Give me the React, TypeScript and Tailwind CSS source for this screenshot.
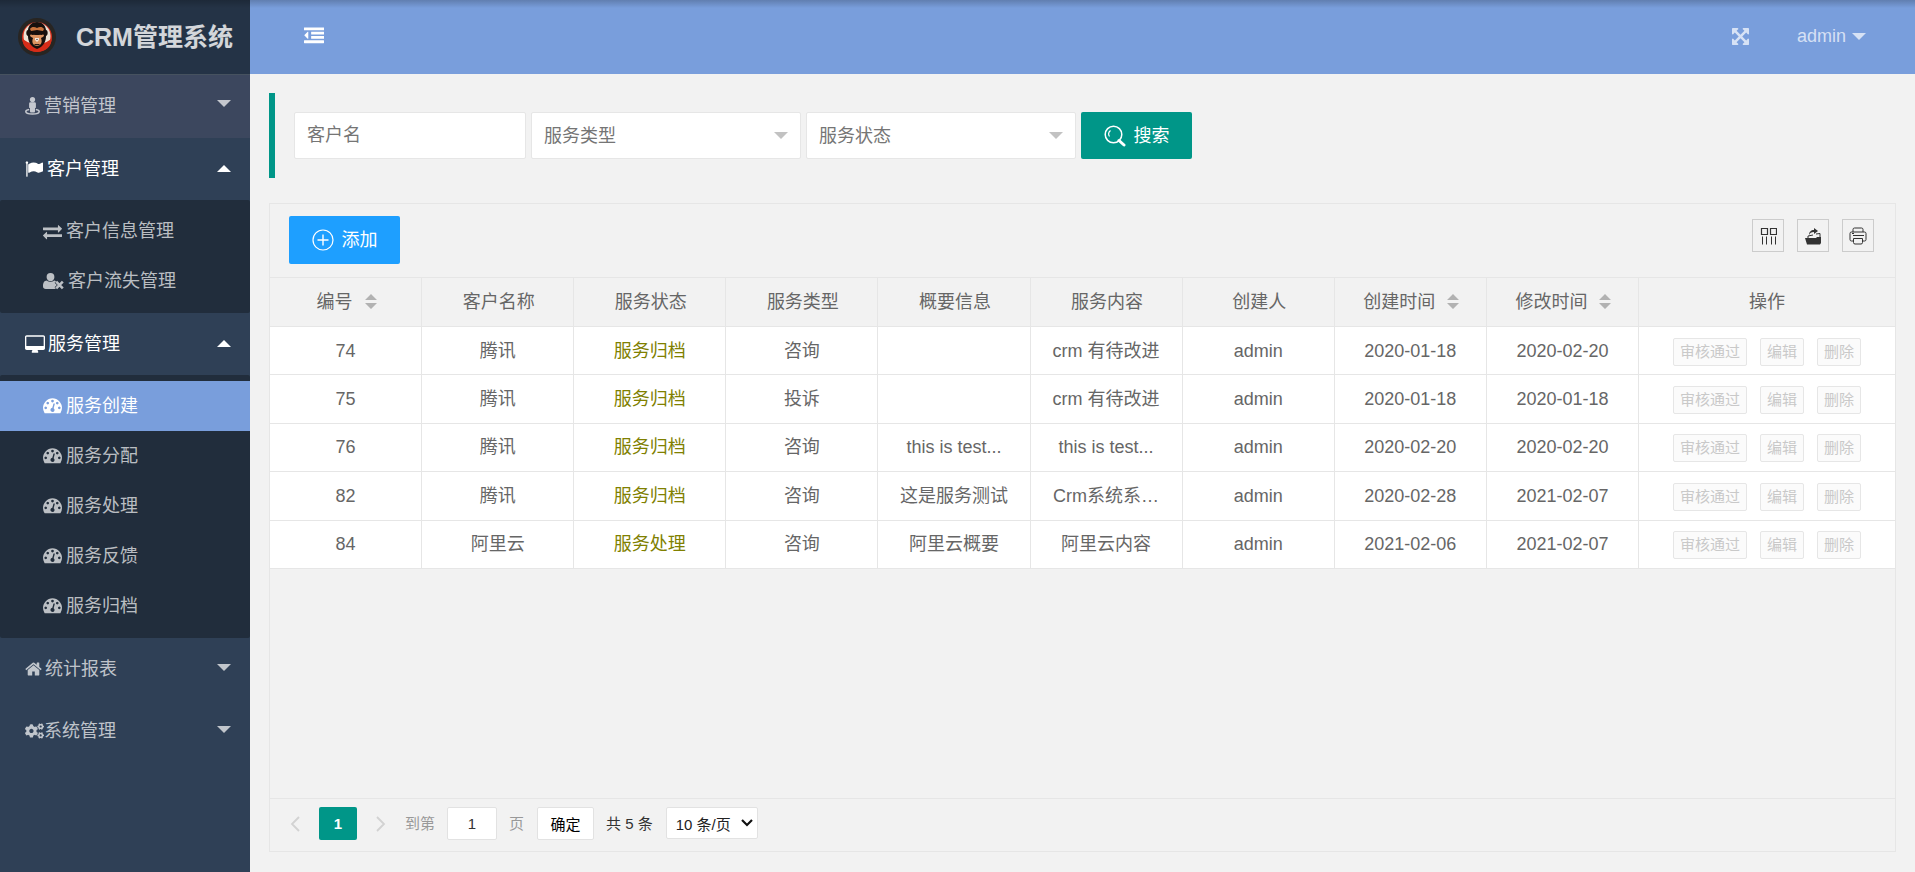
import { useState } from "react";
import type { ReactNode } from "react";
import clsx from "clsx";
import { FaCogs } from "react-icons/fa";

type MenuChild = { title: string; icon: ReactNode };

type MenuItem = {
  title: string;
  icon: ReactNode;
  gap?: string;
  hovered?: boolean;
  open?: boolean;
  children?: MenuChild[];
};

type ServiceRow = {
  id: number;
  customer: string;
  state: string;
  type: string;
  overview: string;
  content: string;
  creator: string;
  createDate: string;
  updateDate: string;
};

const Glyph = ({
  d,
  className,
  viewBox = "0 0 1792 1792",
}: {
  d: string;
  className: string;
  viewBox?: string;
}) => (
  <svg viewBox={viewBox} className={className} fill="currentColor" aria-hidden>
    <path d={d} />
  </svg>
);

const FLAG =
  "M320 256q0 72-64 110v1266q0 13-9.5 22.5t-22.5 9.5h-64q-13 0-22.5-9.5t-9.5-22.5v-1266q-64-38-64-110 0-53 37.5-90.5t90.5-37.5 90.5 37.5 37.5 90.5zm1472 64v763q0 25-12.5 38.5t-39.5 27.5q-215 116-369 116-61 0-123.5-22t-108.5-48-115.5-48-142.5-22q-192 0-464 146-17 9-33 9-26 0-45-19t-19-45v-742q0-32 31-55 21-14 79-43 236-120 421-120 107 0 200 29t219 88q38 19 88 19 54 0 117.5-21t110-47 88-47 54.5-21q26 0 45 19t19 45z";
const EXCHANGE =
  "M1792 1184v192q0 13-9.5 22.5t-22.5 9.5h-1376v192q0 13-9.5 22.5t-22.5 9.5q-12 0-24-10l-319-320q-9-9-9-22 0-14 9-23l320-320q9-9 23-9 13 0 22.5 9.5t9.5 22.5v192h1376q13 0 22.5 9.5t9.5 22.5zm0-544q0 14-9 23l-320 320q-9 9-23 9-13 0-22.5-9.5t-9.5-22.5v-192h-1376q-13 0-22.5-9.5t-9.5-22.5v-192q0-13 9.5-22.5t22.5-9.5h1376v-192q0-14 9-23t23-9q12 0 24 10l319 319q9 9 9 23z";
const DESKTOP =
  "M1728 992v-832q0-13-9.5-22.5t-22.5-9.5h-1600q-13 0-22.5 9.5t-9.5 22.5v832q0 13 9.5 22.5t22.5 9.5h1600q13 0 22.5-9.5t9.5-22.5zm128-832v1088q0 66-47 113t-113 47h-544q0 37 16 77.5t32 71 16 43.5q0 26-19 45t-45 19h-512q-26 0-45-19t-19-45q0-14 16-44t32-70 16-78h-544q-66 0-113-47t-47-113v-1088q0-66 47-113t113-47h1600q66 0 113 47t47 113z";
const GAUGE =
  "M384 1152q0-53-37.5-90.5t-90.5-37.5-90.5 37.5-37.5 90.5 37.5 90.5 90.5 37.5 90.5-37.5 37.5-90.5zm192-448q0-53-37.5-90.5t-90.5-37.5-90.5 37.5-37.5 90.5 37.5 90.5 90.5 37.5 90.5-37.5 37.5-90.5zm428 481l101-382q6-26-7.5-48.5t-38.5-29.5-48 6.5-30 39.5l-101 382q-60 5-107 43.5t-63 98.5q-20 77 20 146t117 89 146-20 89-117q16-60-6-117t-72-91zm660-33q0-53-37.5-90.5t-90.5-37.5-90.5 37.5-37.5 90.5 37.5 90.5 90.5 37.5 90.5-37.5 37.5-90.5zm-640-640q0-53-37.5-90.5t-90.5-37.5-90.5 37.5-37.5 90.5 37.5 90.5 90.5 37.5 90.5-37.5 37.5-90.5zm448 192q0-53-37.5-90.5t-90.5-37.5-90.5 37.5-37.5 90.5 37.5 90.5 90.5 37.5 90.5-37.5 37.5-90.5zm320 448q0 261-141 483-19 29-54 29h-1402q-35 0-54-29-141-221-141-483 0-182 71-348t191-286 286-191 348-71 348 71 286 191 191 286 71 348z";
const HOME =
  "M1472 992v480q0 26-19 45t-45 19h-384v-384h-256v384h-384q-26 0-45-19t-19-45v-480q0-1 .5-3t.5-3l575-474 575 474q1 2 1 6zm223-69l-62 74q-8 9-21 11h-3q-13 0-21-7l-692-577-692 577q-12 8-24 7-13-2-21-11l-62-74q-8-10-7-23.5t11-21.5l719-599q32-26 76-26t76 26l244 204v-195q0-14 9-23t23-9h192q14 0 23 9t9 23v408l219 182q10 8 11 21.5t-7 23.5z";
const OUTDENT =
  "M384 544v576q0 13-9.5 22.5t-22.5 9.5q-14 0-23-9l-288-288q-9-9-9-23t9-23l288-288q9-9 23-9 13 0 22.5 9.5t9.5 22.5zm1408 768v192q0 13-9.5 22.5t-22.5 9.5h-1728q-13 0-22.5-9.5t-9.5-22.5v-192q0-13 9.5-22.5t22.5-9.5h1728q13 0 22.5 9.5t9.5 22.5zm0-384v192q0 13-9.5 22.5t-22.5 9.5h-1088q-13 0-22.5-9.5t-9.5-22.5v-192q0-13 9.5-22.5t22.5-9.5h1088q13 0 22.5 9.5t9.5 22.5zm0-384v192q0 13-9.5 22.5t-22.5 9.5h-1088q-13 0-22.5-9.5t-9.5-22.5v-192q0-13 9.5-22.5t22.5-9.5h1088q13 0 22.5 9.5t9.5 22.5zm0-384v192q0 13-9.5 22.5t-22.5 9.5h-1728q-13 0-22.5-9.5t-9.5-22.5v-192q0-13 9.5-22.5t22.5-9.5h1728q13 0 22.5 9.5t9.5 22.5z";
const ARROWS =
  "M1411 541l-355 355 355 355 144-144q29-31 70-14 39 17 39 59v448q0 26-19 45t-45 19h-448q-42 0-59-40-17-39 14-69l144-144-355-355-355 355 144 144q31 30 14 69-17 40-59 40h-448q-26 0-45-19t-19-45v-448q0-42 40-59 39-17 69 14l144 144 355-355-355-355-144 144q-19 19-45 19-12 0-24-5-40-17-40-59v-448q0-26 19-45t45-19h448q42 0 59 40 17 39-14 69l-144 144 355 355 355-355-144-144q-31-30-14-69 17-40 59-40h448q26 0 45 19t19 45v448q0 42-39 59-13 5-25 5-26 0-45-19z";

const StreetView = () => (
  <svg viewBox="0 0 15 18" className="h-[18px] w-[15px]" fill="currentColor" aria-hidden>
    <circle cx="7.5" cy="2.600" r="2.600" />
    <path d="M5.500 5.200h4q1.400 0 1.400 1.400v3.600q0 .9-.9.9v3.400q0 .9-.9.9H5.900q-.9 0-.9-.9v-3.400q-.9 0-.9-.9V6.600q0-1.400 1.400-1.400z" />
    <path
      fill="none"
      stroke="currentColor"
      strokeWidth="1.500"
      d="M4.200 12.600C2.200 12.900.8 13.500.8 14.500c0 1.500 3 2.500 6.700 2.500s6.700-1 6.700-2.500c0-1-1.400-1.600-3.400-1.900"
    />
  </svg>
);

const UserTimes = () => (
  <svg viewBox="0 0 21 18" className="h-[18px] w-[21px]" aria-hidden>
    <path
      fill="currentColor"
      d="M7.5 1a3.9 4 0 0 1 3.9 4A3.9 4 0 0 1 7.5 9.2 3.9 4 0 0 1 3.6 5 3.9 4 0 0 1 7.500 1zM4 8.600C5 9.600 6.200 10 7.500 10s2.500-.4 3.500-1.400c.8 0 1.500.2 2.100.6L11.600 10.700l2.300 2.300-2.300 2.300 1.300 1.300c-.3.3-.8.4-1.300.4H2.800C1 17 0 16 0 14.200 0 11.500.8 8.600 4 8.600z"
    />
    <path
      stroke="currentColor"
      strokeWidth="2.6"
      d="M13.200 9.700l6.600 6.600M19.800 9.700l-6.600 6.600"
    />
  </svg>
);

const MonkeyLogo = () => (
  <svg viewBox="0 0 38 38" className="size-[38px]" aria-hidden>
    <circle cx="19" cy="19" r="19" fill="#282522" />
    <circle cx="19" cy="19" r="15" fill="#d8301c" />
    <circle cx="19" cy="18" r="13.500" fill="#ece2d4" />
    <path d="M4.500 21l5 3 9.500 4 9.500-4 5-3c0 8-6.500 13-14.500 13S4.500 29 4.500 21z" fill="#d62c18" />
    <path
      d="M19 4c-5 0-8.500 3-9 8-2 0-2.500 5 0 6 0 6 3 11 9 13 6-2 9-7 9-13 2.500-1 2-6 0-6-.5-5-4-8-9-8z"
      fill="#17100d"
    />
    <path d="M12 11c2-3 5-2 7-1 2-1 5-2 7 1l-1 2-6-1-6 1z" fill="#c9743d" />
    <path
      d="M12 17c2-1 4 0 7 0s5-1 7 0c0 2-2 2-3 3 1 3 1 5-1 7-1 1-5 1-6 0-2-2-2-4-1-7-1-1-3-1-3-3z"
      fill="#dc9460"
    />
    <path d="M12 14h14l-2 3-5-1-5 1z" fill="#17100d" />
    <path d="M17 20h4v2l-2 2-2-2z" fill="#f1e6da" />
    <path d="M18 21h2l-1 1zM16 26h6l-1 1h-4z" fill="#2a1b14" />
  </svg>
);

const Caret = ({ up, className }: { up?: boolean; className?: string }) => (
  <svg viewBox="0 0 14 7" className={clsx("h-[7px] w-[14px]", className)} fill="currentColor" aria-hidden>
    <path d={up ? "M0 7L7 0l7 7z" : "M0 0h14L7 7z"} />
  </svg>
);

const gauge = <Glyph d={GAUGE} viewBox="0 128 1792 1792" className="size-[19px]" />;

const menu: MenuItem[] = [
  {
    title: "营销管理",
    icon: <StreetView />,
    gap: "gap-1",
    hovered: true,
  },
  {
    title: "客户管理",
    icon: <Glyph d={FLAG} className="h-[18px] w-[18px]" />,
    gap: "gap-1",
    open: true,
    children: [
      { title: "客户信息管理", icon: <Glyph d={EXCHANGE} className="size-[19px]" /> },
      { title: "客户流失管理", icon: <UserTimes /> },
    ],
  },
  {
    title: "服务管理",
    icon: <Glyph d={DESKTOP} viewBox="-64 0 1920 1664" className="h-[18px] w-[20px]" />,
    gap: "gap-[3px]",
    open: true,
    children: [
      { title: "服务创建", icon: gauge },
      { title: "服务分配", icon: gauge },
      { title: "服务处理", icon: gauge },
      { title: "服务反馈", icon: gauge },
      { title: "服务归档", icon: gauge },
    ],
  },
  {
    title: "统计报表",
    icon: <Glyph d={HOME} viewBox="64 0 1664 1792" className="h-[18px] w-[17px]" />,
    gap: "gap-[3px]",
  },
  { title: "系统管理", icon: <FaCogs className="h-[18px] w-[19px]" /> },
];

const rows: ServiceRow[] = [
  { id: 74, customer: "腾讯", state: "服务归档", type: "咨询", overview: "", content: "crm 有待改进", creator: "admin", createDate: "2020-01-18", updateDate: "2020-02-20" },
  { id: 75, customer: "腾讯", state: "服务归档", type: "投诉", overview: "", content: "crm 有待改进", creator: "admin", createDate: "2020-01-18", updateDate: "2020-01-18" },
  { id: 76, customer: "腾讯", state: "服务归档", type: "咨询", overview: "this is test...", content: "this is test...", creator: "admin", createDate: "2020-02-20", updateDate: "2020-02-20" },
  { id: 82, customer: "腾讯", state: "服务归档", type: "咨询", overview: "这是服务测试", content: "Crm系统系…", creator: "admin", createDate: "2020-02-28", updateDate: "2021-02-07" },
  { id: 84, customer: "阿里云", state: "服务处理", type: "咨询", overview: "阿里云概要", content: "阿里云内容", creator: "admin", createDate: "2021-02-06", updateDate: "2021-02-07" },
];

const columns = [
  { title: "编号", sort: true },
  { title: "客户名称" },
  { title: "服务状态" },
  { title: "服务类型" },
  { title: "概要信息" },
  { title: "服务内容" },
  { title: "创建人" },
  { title: "创建时间", sort: true },
  { title: "修改时间", sort: true },
];

const Sidebar = () => {
  const [active, setActive] = useState("服务创建");

  return (
    <aside className="w-[250px] shrink-0 bg-[#2f4056]">
      <a
        href="#"
        className="flex h-[75px] items-center border-b border-[#46525f] bg-[#243346] pl-[18px]"
      >
        <MonkeyLogo />
        <h1 className="pl-5 text-[25px] leading-[38px] font-bold text-white/80">
          CRM管理系统
        </h1>
      </a>
      <nav>
        {menu.map((item) => (
          <div key={item.title}>
            <button
              className={clsx(
                "flex w-full items-center justify-between pr-[19px] pl-[25px]",
                item.hovered ? "h-[63px] bg-[#3c475e] pb-[2px]" : "h-[62px]",
                item.open ? "text-white" : "text-white/70",
              )}
            >
              <span className={clsx("flex items-center", item.gap)}>
                {item.icon}
                {item.title}
              </span>
              <Caret up={item.open} className={item.open ? "mb-[2px]" : "mb-1"} />
            </button>
            {item.children && (
              <ul className="rounded-xs bg-[#212d3c] pt-[6px] pb-[7px]">
                {item.children.map((child) => (
                  <li key={child.title}>
                    <a
                      href="#"
                      onClick={() => setActive(child.title)}
                      className={clsx(
                        "flex h-[50px] items-center gap-1 pl-[43px]",
                        active === child.title
                          ? "bg-[#799edc] text-white"
                          : "text-white/70",
                      )}
                    >
                      {child.icon}
                      {child.title}
                    </a>
                  </li>
                ))}
              </ul>
            )}
          </div>
        ))}
      </nav>
    </aside>
  );
};

const FilterSelect = ({ label }: { label: string }) => (
  <div className="grid w-[270px] items-center">
    <select
      aria-label={label}
      className="col-start-1 row-start-1 h-[47px] appearance-none rounded-xs border border-[#e6e6e6] bg-white pl-3 text-[#757575]"
    >
      <option>{label}</option>
    </select>
    <Caret className="pointer-events-none col-start-1 row-start-1 mr-[13px] justify-self-end text-[#c2c2c2]" />
  </div>
);

const SortArrows = () => (
  <svg viewBox="0 0 12 16" className="h-4 w-3" fill="#b2b2b2" aria-hidden>
    <path d="M6 0l6 6H0zM0 9h12l-6 6z" />
  </svg>
);

const ToolButton = ({ label, children }: { label: string; children: ReactNode }) => (
  <button
    aria-label={label}
    className="flex h-[33px] w-8 items-center justify-center border border-[#ccc] text-[#333]"
  >
    {children}
  </button>
);

const Toolbar = () => (
  <div className="flex h-[73px] items-start justify-between py-3 pr-[21px] pl-[19px]">
    <button className="flex h-12 w-[111px] items-center justify-center gap-2 rounded-xs bg-[#1e9fff] text-white">
      <svg viewBox="0 0 22 22" className="size-[22px]" fill="none" stroke="currentColor" aria-hidden>
        <circle cx="11" cy="11" r="10" strokeWidth="1.200" />
        <path d="M11 5.500v11M5.500 11h11" strokeWidth="1.400" />
      </svg>
      添加
    </button>
    <div className="flex gap-[13px] pt-[3px]">
      <ToolButton label="筛选列">
        <svg viewBox="0 0 18 18" className="size-[18px]" fill="none" stroke="currentColor" aria-hidden>
          <path d="M2.500 1.500h6v6h-6zM11.500 1.500h6v6h-6z" strokeWidth="1.200" />
          <path d="M3.500 9.500v8M7.500 9.500v8M12.500 9.500v8M16.500 9.500v8" />
        </svg>
      </ToolButton>
      <ToolButton label="导出">
        <svg viewBox="0 0 18 18" className="size-[18px]" aria-hidden>
          <path fill="currentColor" d="M1 11h11l1-1h4v6l-1 1.500H3zM5 8c0-3 2-5 5-5V1l4 3-4 3V5C7 5 6 6 5 8z" />
          <path fill="none" stroke="currentColor" d="M4 11V9l5-1M12 7l4-.5v5" />
        </svg>
      </ToolButton>
      <ToolButton label="打印">
        <svg viewBox="0 0 18 18" className="size-[18px]" fill="none" stroke="currentColor" aria-hidden>
          <path d="M4 5V2.500Q4 1 5.500 1h7Q14 1 14 2.500V5M4.500 14H2.500Q1 14 1 12.500v-6Q1 5 2.500 5h13Q17 5 17 6.500v6Q17 14 15.500 14h-2" />
          <path d="M4.500 11.500h9v4q0 1.500-1.500 1.500H6q-1.500 0-1.500-1.500zM4 8.500h11M3 6.500h2" />
        </svg>
      </ToolButton>
    </div>
  </div>
);

const ServiceTable = () => (
  <table className="h-[292px] w-full table-fixed border-separate border-spacing-0 text-center">
    <thead>
      <tr className="h-[50px]">
        {columns.map((col) => (
          <th
            key={col.title}
            className="h-[50px] border-t border-r border-b border-[#e6e6e6] p-0 font-normal"
          >
            <span className="flex items-center justify-center gap-3 pl-[2px]">
              {col.title}
              {col.sort && <SortArrows />}
            </span>
          </th>
        ))}
        <th className="w-[256px] border-t border-b border-[#e6e6e6] p-0 font-normal">
          操作
        </th>
      </tr>
    </thead>
    <tbody className="bg-white">
      {rows.map((row) => (
        <tr
          key={row.id}
          className="h-12 [&>td]:border-b [&>td]:border-[#e6e6e6] [&>td]:p-0 [&>td:not(:last-child)]:border-r"
        >
          <td>{row.id}</td>
          <td>{row.customer}</td>
          <td className="text-[#808000]">{row.state}</td>
          <td>{row.type}</td>
          <td>{row.overview}</td>
          <td>{row.content}</td>
          <td>{row.creator}</td>
          <td>{row.createDate}</td>
          <td>{row.updateDate}</td>
          <td>
            <div className="flex justify-center gap-[13px] pt-[2px] text-[15px] text-[#c9c9c9]">
              {["审核通过", "编辑", "删除"].map((name) => (
                <button
                  key={name}
                  disabled
                  className="h-7 rounded-xs border border-[#e6e6e6] bg-[#fbfbfb] px-[6px]"
                >
                  {name}
                </button>
              ))}
            </div>
          </td>
        </tr>
      ))}
    </tbody>
  </table>
);

const Pager = () => (
  <div className="flex h-[53px] items-start border-t border-[#e6e6e6] pt-2 pl-5 text-[15px] leading-[33px] text-[#333]">
    <button aria-label="上一页" className="flex h-[33px] items-center text-[#d2d2d2]">
      <svg viewBox="0 0 10 16" className="h-4 w-[10px]" fill="none" stroke="currentColor" strokeWidth="1.800" aria-hidden>
        <path d="M9 1L2 8l7 7" />
      </svg>
    </button>
    <button className="ml-[19px] h-[33px] w-[38px] rounded-xs bg-[#009688] font-bold text-white">
      1
    </button>
    <button aria-label="下一页" className="ml-[19px] flex h-[33px] items-center text-[#d2d2d2]">
      <svg viewBox="0 0 10 16" className="h-4 w-[10px]" fill="none" stroke="currentColor" strokeWidth="1.800" aria-hidden>
        <path d="M1 1l7 7-7 7" />
      </svg>
    </button>
    <label className="ml-[19px] flex text-[#999]">
      到第
      <input
        defaultValue="1"
        className="mx-3 h-[33px] w-[50px] rounded-xs border border-[#e2e2e2] bg-white text-center text-[#333]"
      />
      页
    </label>
    <button className="ml-[13px] h-[33px] w-[57px] rounded-xs border border-[#e2e2e2] bg-white text-black">
      确定
    </button>
    <span className="ml-3">共 5 条</span>
    <div className="ml-[13px] grid w-[92px] items-center">
      <select
        aria-label="每页条数"
        className="col-start-1 row-start-1 h-8 appearance-none rounded-xs border border-[#e2e2e2] bg-white pl-[9px] text-[#222]"
      >
        <option>10 条/页</option>
      </select>
      <svg
        viewBox="0 0 12 8"
        className="pointer-events-none col-start-1 row-start-1 mr-[5px] h-2 w-3 justify-self-end"
        fill="none"
        stroke="#111"
        strokeWidth="2.200"
        aria-hidden
      >
        <path d="M1 1l5 5 5-5" />
      </svg>
    </div>
  </div>
);

const App = () => {
  return (
    <div className="relative flex min-h-screen bg-[#f2f2f2] font-['Liberation_Sans','Noto_Sans_CJK_SC',sans-serif] text-[18px] leading-6 text-[#666]">
      <Sidebar />
      <div className="flex min-w-0 flex-1 flex-col">
        <header className="flex h-[74px] items-center justify-between bg-[#799edc] pr-[49px] pb-[2px] pl-[54px]">
          <button aria-label="收起菜单" className="text-white">
            <Glyph d={OUTDENT} className="size-5" />
          </button>
          <div className="flex items-center gap-12 text-white/70">
            <button aria-label="全屏">
              <Glyph d={ARROWS} viewBox="128 128 1536 1536" className="size-[17px]" />
            </button>
            <a href="#" className="flex items-center gap-[6px]">
              admin
              <Caret />
            </a>
          </div>
        </header>

        <main className="flex flex-1 flex-col px-[19px] pt-[19px] pb-[20px]">
          <form className="flex gap-[5px] border-l-6 border-[#009688] py-[19px] pl-[19px]">
            <input
              aria-label="客户名"
              placeholder="客户名"
              className="h-[47px] w-[232px] rounded-xs border border-[#e6e6e6] bg-white pl-3 placeholder:text-[#757575]"
            />
            <FilterSelect label="服务类型" />
            <FilterSelect label="服务状态" />
            <button
              type="button"
              className="flex h-[47px] w-[111px] items-center justify-center gap-2 rounded-xs bg-[#009688] text-white"
            >
              <svg viewBox="0 0 22 22" className="size-[22px]" fill="none" stroke="currentColor" aria-hidden>
                <circle cx="9.500" cy="9.500" r="8.300" strokeWidth="1.500" />
                <path d="M5.500 11.500a4.500 4.500 0 0 1 1-6" strokeWidth="1.200" />
                <path d="M15 15.500l5 4.500" strokeWidth="3" strokeLinecap="round" />
              </svg>
              搜索
            </button>
          </form>

          <section className="mt-[25px] flex flex-1 flex-col justify-between border border-[#e6e6e6]">
            <div>
              <Toolbar />
              <ServiceTable />
            </div>
            <Pager />
          </section>
        </main>
      </div>
      {/* soft shade along the top edge of the window */}
      <div className="pointer-events-none absolute inset-x-0 top-0 h-2 bg-gradient-to-b from-black/20 to-transparent" />
    </div>
  );
};

export default App;
